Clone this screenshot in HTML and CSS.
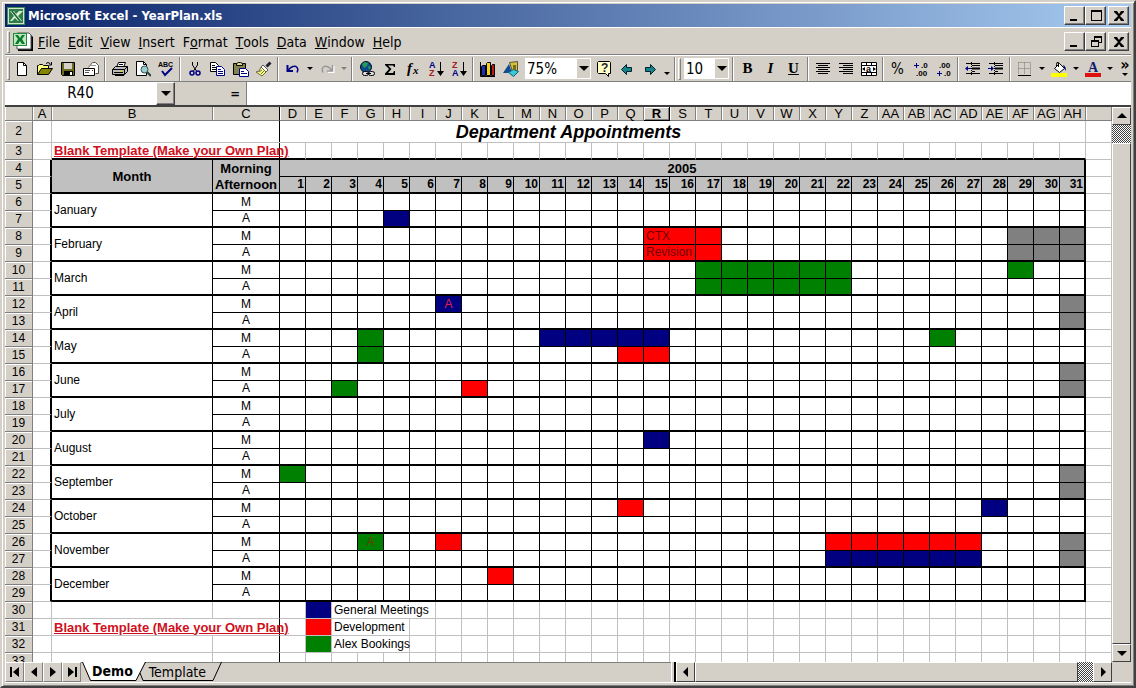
FILE: index.html
```
<!DOCTYPE html>
<html lang="en">
<head>
    <meta charset="UTF-8">
    <meta name="viewport" content="width=device-width, initial-scale=1.0">
    <title>Microsoft Excel - YearPlan.xls</title>
    <link rel="stylesheet" href="styles.css">
</head>
<body>
    <div class="window">
        <header class="title-bar">
            <svg class="logo" viewBox="0 0 18 18">
                <rect width="18" height="18" fill="#3f8a5a"/>
                <rect x="1" y="1" width="16" height="16" fill="#cfe6cc"/>
                <rect x="2" y="2" width="14" height="14" fill="#2f7d4a"/>
                <path d="M3 4h4l2 3 3-3h4l-5 5 4 5h-4l-3-3-3 3H3l4-5z" fill="#d8f0d0"/>
                <path d="M4 4h2l8 10h-2z" fill="#1b5e30"/>
            </svg>
            <h1>Microsoft Excel - YearPlan.xls</h1>
            <div class="window-buttons">
                <button aria-label="Minimize"><svg viewBox="0 0 16 14"><path d="M3 10h7v2H3z"/></svg></button>
                <button aria-label="Maximize"><svg viewBox="0 0 16 14"><path d="M3 1h11v11H3zM4 3v8h9V3z" fill-rule="evenodd"/></svg></button>
                <button class="close" aria-label="Close"><svg viewBox="0 0 16 14"><path d="M3 2h3l2 3 2-3h3v1L9 7l4 4v1h-3L8 9l-2 3H3v-1l4-4-4-4z"/></svg></button>
            </div>
        </header>

        <nav class="menu-bar">
            <span class="grip"></span>
            <svg class="doc-icon" viewBox="0 0 22 20">
                <path d="M6 2h12l3 3v14H6z" fill="#000"/>
                <path d="M5 1h12l2 2v14H5z" fill="#fff" stroke="#555"/>
                <rect x="1" y="1" width="14" height="13" fill="#1f8a3c"/>
                <rect x="2" y="2" width="12" height="11" fill="#bfe8c0"/>
                <path d="M3 3h3l2 3 2-3h3l-3 4 3 5h-3l-2-3-2 3H3l3-5z" fill="#0a7a2a"/>
            </svg>
            <button><u>F</u>ile</button>
            <button><u>E</u>dit</button>
            <button><u>V</u>iew</button>
            <button><u>I</u>nsert</button>
            <button>F<u>o</u>rmat</button>
            <button><u>T</u>ools</button>
            <button><u>D</u>ata</button>
            <button><u>W</u>indow</button>
            <button><u>H</u>elp</button>
            <div class="window-buttons">
                <button aria-label="Minimize workbook"><svg viewBox="0 0 16 14"><path d="M3 10h7v2H3z"/></svg></button>
                <button aria-label="Restore workbook"><svg viewBox="0 0 16 14"><path d="M6 1h8v7h-3v4H3V5h3zM7 3v2h4v2h2V3zM4 7v4h6V7z" fill-rule="evenodd"/></svg></button>
                <button class="close" aria-label="Close workbook"><svg viewBox="0 0 16 14"><path d="M3 2h3l2 3 2-3h3v1L9 7l4 4v1h-3L8 9l-2 3H3v-1l4-4-4-4z"/></svg></button>
            </div>
        </nav>

        <div class="toolbar">
            <span class="grip"></span>
            <button class="tool" aria-label="New"><svg viewBox="0 0 16 16"><path d="M3.500 1.500h6l3 3v10h-9z" fill="#fff" stroke="#000"/><path d="M9.500 1.500v3h3" fill="none" stroke="#000"/></svg></button>
            <button class="tool" aria-label="Open"><svg viewBox="0 0 16 16"><path d="M.5 13.500v-9h1l1-1h3l1 1h5v3" fill="#ffff80" stroke="#000"/><path d="M.5 13.500l4-6h11l-4 6z" fill="#848400" stroke="#000"/><path d="M9 2.500q2-2 4 0l1 1M14.500 1v3H12" fill="none" stroke="#000"/></svg></button>
            <button class="tool" aria-label="Save"><svg viewBox="0 0 16 16"><path d="M1.500 1.500h13v13h-12l-1-1z" fill="#6b6b20" stroke="#000"/><path d="M4 2h8v6H4z" fill="#d4d0c8"/><path d="M4 10h9v5H4z"/><path d="M10 11h2v3h-2z" fill="#fff"/></svg></button>
            <button class="tool" aria-label="E-mail"><svg viewBox="0 0 16 16"><path d="M5.500 6.500l4-5h3l3 3v8h-3" fill="#fff" stroke="#555"/><path d="M.5 7.500h11v7H.5z" fill="#fff" stroke="#000"/><path d="M2 9.500h5M2 11.500h4" stroke="#555"/><path d="M9 9h1v1H9z" fill="#c00"/><path d="M7 4.500h6" stroke="#999"/></svg></button>
            <span class="sep"></span>
            <button class="tool" aria-label="Print"><svg viewBox="0 0 16 16"><path d="M4.500 6.500l2-5h7l-2 5" fill="#fff" stroke="#000"/><path d="M.5 8.500l3-3h12v5l-3 3H.5z" fill="#bbb" stroke="#000"/><path d="M.5 8.500h12v5M12.500 8.500l3-3M2 11.500h9M7 3.500h4" fill="none" stroke="#000"/><path d="M3 14.500h9" stroke="#000"/><path d="M8 10h2v1H8z" fill="#dd0"/></svg></button>
            <button class="tool" aria-label="Print Preview"><svg viewBox="0 0 16 16"><path d="M1.500.5h7l3 3v11h-10z" fill="#fff" stroke="#000"/><path d="M8.500.5v3h3" fill="none" stroke="#000"/><circle cx="9.500" cy="8.500" r="3.500" fill="#9cc" stroke="#355"/><path d="M12 11l4 4" stroke="#244" stroke-width="2"/></svg></button>
            <button class="tool" aria-label="Spelling"><svg viewBox="0 0 16 16"><text x="0" y="6" font-size="7" font-weight="700">ABC</text><path d="M4 10l3 4 7-7" fill="none" stroke="#000084" stroke-width="2"/></svg></button>
            <span class="sep"></span>
            <button class="tool" aria-label="Cut"><svg viewBox="0 0 16 16"><path d="M5.500 1v3l4 6M10.500 1v3l-4 6" fill="none" stroke="#000"/><circle cx="5" cy="12" r="2" fill="none" stroke="#000084" stroke-width="1.500"/><circle cx="11" cy="12" r="2" fill="none" stroke="#000084" stroke-width="1.500"/></svg></button>
            <button class="tool" aria-label="Copy"><svg viewBox="0 0 16 16"><path d="M.5 1.500h5l3 3v6h-8z" fill="#fff" stroke="#000"/><path d="M2 4.500h3M2 6.500h4M2 8.500h4" stroke="#000"/><path d="M6.500 5.500h5l3 3v6h-8z" fill="#fff" stroke="#000084"/><path d="M8 8.500h3M8 10.500h5M8 12.500h5" stroke="#000084"/></svg></button>
            <button class="tool" aria-label="Paste"><svg viewBox="0 0 16 16"><path d="M.5 2.500h12v11H.5z" fill="#84844a" stroke="#000"/><path d="M3.500 4.500v-2l2-1h2l2 1v2z" fill="#dd8" stroke="#000"/><path d="M6.500 7.500h6l3 3v5h-9z" fill="#fff" stroke="#000084"/><path d="M8 10.500h3M8 12.500h6" stroke="#000084"/></svg></button>
            <button class="tool" aria-label="Format Painter"><svg viewBox="0 0 16 16"><path d="M14.500 1.500l-4 4" stroke="#223" stroke-width="3"/><path d="M7 4l5 5-2 2-5-5z" fill="#fff" stroke="#555"/><path d="M5 6l5 5-4 4-6-4 3-1z" fill="#ffff73" stroke="#665"/><path d="M3 11l3-2M5 13l3-3" stroke="#665"/></svg></button>
            <span class="sep"></span>
            <button class="tool" aria-label="Undo"><svg viewBox="0 0 16 16"><path d="M2.500 4v6H8" fill="none" stroke="#000084" stroke-width="2"/><path d="M3 9.500q4-5 8-4 3 2 1 6" fill="none" stroke="#000084" stroke-width="1.500"/></svg></button>
            <button class="drop" aria-label="Undo list"><span class="caret"></span></button>
            <button class="tool" aria-label="Redo" disabled><svg viewBox="0 0 16 16"><path d="M14.500 5v6H9" fill="none" stroke="#fff" stroke-width="2"/><path d="M13.500 4v6H8M13 9.500q-4-5-8-4-3 2-1 6" fill="none" stroke="#999" stroke-width="1.500"/></svg></button>
            <button class="drop" aria-label="Redo list" disabled><span class="caret"></span></button>
            <span class="sep"></span>
            <button class="tool" aria-label="Insert Hyperlink"><svg viewBox="0 0 16 16"><circle cx="7" cy="6" r="5.500" fill="#0a4a8c" stroke="#012"/><path d="M3 3l3-2 3 1-1 3-3 2zM9 5l3 1-2 3z" fill="#2a9a5a"/><rect x="3.500" y="10.500" width="6" height="4" rx="2" fill="#ddd" stroke="#000"/><rect x="9.500" y="10.500" width="6" height="4" rx="2" fill="#ddd" stroke="#000"/><path d="M7 12.500h5" stroke="#000"/></svg></button>
            <button class="tool" aria-label="AutoSum"><svg viewBox="0 0 16 16"><path d="M3 3h10v3h-1l-1-1.500H6L9.500 8 6 12h5l1-2h1v4H3v-1.500L7 8 3 4z"/></svg></button>
            <button class="tool" aria-label="Paste Function"><svg viewBox="0 0 16 16"><text class="serif" x="2" y="12" font-size="15" font-weight="700" font-style="italic">f</text><text class="serif" x="8" y="13" font-size="11" font-weight="700" font-style="italic">x</text></svg></button>
            <button class="tool" aria-label="Sort Ascending"><svg viewBox="0 0 16 16"><text x="1" y="7" font-size="9" font-weight="700" fill="#000084">A</text><text x="1" y="15" font-size="9" font-weight="700" fill="#a02020">Z</text><path d="M12 1h1v9h3l-3.500 5L9 10h3z"/></svg></button>
            <button class="tool" aria-label="Sort Descending"><svg viewBox="0 0 16 16"><text x="1" y="7" font-size="9" font-weight="700" fill="#a02020">Z</text><text x="1" y="15" font-size="9" font-weight="700" fill="#000084">A</text><path d="M12 1h1v9h3l-3.500 5L9 10h3z"/></svg></button>
            <span class="sep"></span>
            <button class="tool" aria-label="Chart Wizard"><svg viewBox="0 0 16 16"><path d="M.5 1v14.500H15" fill="none" stroke="#000"/><path d="M1.500 5.500l1-1h3v10h-4z" fill="#2030b0" stroke="#000"/><path d="M6.500 2.500l1-1h3v13h-4z" fill="#f0d020" stroke="#000"/><path d="M11.500 4.500l1-1h2v11h-3z" fill="#c01818" stroke="#000"/></svg></button>
            <button class="tool" aria-label="Drawing"><svg viewBox="0 0 16 16"><path d="M6.500 1.500l8-1v9l-5 1z" fill="#d8c030" stroke="#554"/><path d="M0 12L6 3l3 9z" fill="#104a90"/><path d="M5.500 11.500l5-3 5 2-5 5z" fill="#40c8d0" stroke="#068"/><path d="M10 4h3v5h-3z" fill="#707020"/></svg></button>
            <span class="combo zoom"><select aria-label="Zoom"><option>75%</option></select><span class="combo-arrow"><span class="caret big"></span></span></span>
            <button class="tool" aria-label="Help"><svg viewBox="0 0 16 16"><path d="M2.500.5h11l1 1v11h-2v3l-3-3h-7l-1-1v-10z" fill="#ffffc6" stroke="#000"/><text x="5" y="11" font-size="12" font-weight="700" fill="#223">?</text></svg></button>
            <button class="tool" aria-label="Back"><svg viewBox="0 0 16 16"><path d="M2.500 8.500l5-5v3h5v4h-5v3z" fill="#148484" stroke="#023"/></svg></button>
            <button class="tool" aria-label="Forward"><svg viewBox="0 0 16 16"><path d="M13.500 8.500l-5-5v3h-5v4h5v3z" fill="#148484" stroke="#023"/></svg></button>
            <button class="drop low" aria-label="More standard buttons"><span class="caret"></span></button>
            <span class="edge"></span>
            <span class="grip"></span>
            <span class="combo size"><select aria-label="Font Size"><option>10</option></select><span class="combo-arrow"><span class="caret big"></span></span></span>
            <span class="sep"></span>
            <button class="tool letter" aria-label="Bold"><b>B</b></button>
            <button class="tool letter" aria-label="Italic"><i>I</i></button>
            <button class="tool letter" aria-label="Underline"><u>U</u></button>
            <span class="sep"></span>
            <button class="tool" aria-label="Center"><svg viewBox="0 0 16 16"><path d="M1 2.500h14M3 4.500h10M1 6.500h14M3 8.500h10M1 10.500h14M3 12.500h10" stroke="#000"/></svg></button>
            <button class="tool" aria-label="Align Right"><svg viewBox="0 0 16 16"><path d="M1 2.500h14M5 4.500h10M1 6.500h14M5 8.500h10M1 10.500h14M5 12.500h10" stroke="#000"/></svg></button>
            <button class="tool" aria-label="Merge and Center"><svg viewBox="0 0 16 16"><path d="M.5 1.500h15v13H.5zM.5 4.500h15M.5 11.500h15M5.500 1.500v3M10.500 1.500v3M5.500 11.500v3M10.500 11.500v3" fill="#fff" stroke="#000"/><text x="5" y="11" font-size="9" font-weight="700">a</text><path d="M1 8l3-2v4zM15 8l-3-2v4z"/></svg></button>
            <span class="sep"></span>
            <button class="tool percent" aria-label="Percent Style">%</button>
            <button class="tool" aria-label="Increase Decimal"><svg viewBox="0 0 16 16"><text x="8" y="7" font-size="8" font-weight="700">.0</text><text x="3" y="15" font-size="8" font-weight="700">.00</text><path d="M1 4.500h5M3.500 2v5" stroke="#000084"/></svg></button>
            <button class="tool" aria-label="Decrease Decimal"><svg viewBox="0 0 16 16"><text x="3" y="7" font-size="8" font-weight="700">.00</text><text x="8" y="15" font-size="8" font-weight="700">.0</text><path d="M1 12.500h5M3.500 10v5" stroke="#000084"/></svg></button>
            <span class="sep"></span>
            <button class="tool" aria-label="Decrease Indent"><svg viewBox="0 0 16 16"><path d="M1 2.500h14M7 4.500h8M7 10.500h3M1 12.500h14" stroke="#000"/><path d="M7 7.500h8" stroke="#000" stroke-width="2"/><path d="M0 7.500L3 5v2h3v1H3v2z" fill="#000084"/><path d="M6.500 1v14" stroke="#000" stroke-dasharray="1 1"/></svg></button>
            <button class="tool" aria-label="Increase Indent"><svg viewBox="0 0 16 16"><path d="M1 2.500h14M7 4.500h8M7 10.500h3M1 12.500h14" stroke="#000"/><path d="M7 7.500h8" stroke="#000" stroke-width="2"/><path d="M6 7.500L3 5v2H0v1h3v2z" fill="#000084"/><path d="M6.500 1v14" stroke="#000" stroke-dasharray="1 1"/></svg></button>
            <span class="sep"></span>
            <button class="tool" aria-label="Borders"><svg viewBox="0 0 16 16"><path d="M1.500 1.500h12v12M1.500 1.500v12M7.500 1.500v12M1.500 7.500h12" fill="none" stroke="#777" stroke-dasharray="1 1"/><path d="M1 14.500h13" stroke="#000"/></svg></button>
            <button class="drop" aria-label="Border styles"><span class="caret"></span></button>
            <button class="tool" aria-label="Fill Color"><svg viewBox="0 0 16 16"><path d="M0 12h16v4H0z" fill="#ff0"/><path d="M3.500 7.500l5-5 5 5-5 4z" fill="#fff" stroke="#000"/><path d="M7.500 6V1.500q-2-1-2 2v2" fill="none" stroke="#000"/><path d="M12 4q3 1 3 6l-2-3z" fill="#000084"/></svg></button>
            <button class="drop" aria-label="Fill colors"><span class="caret"></span></button>
            <button class="tool" aria-label="Font Color"><svg viewBox="0 0 16 16"><path d="M0 12h16v4H0z" fill="#e01010"/><text class="serif" x="3" y="11" font-size="14" font-weight="700" fill="#102070">A</text></svg></button>
            <button class="drop" aria-label="Font colors"><span class="caret"></span></button>
            <button class="more" aria-label="More buttons"><span>»</span><span class="caret"></span></button>
        </div>

        <div class="formula-bar">
            <input class="name-box" aria-label="Name Box" value="R40">
            <button class="name-drop" aria-label="Names"><span class="caret big"></span></button>
            <button class="equals" aria-label="Edit Formula">=</button>
            <input class="formula" aria-label="Formula">
        </div>

        <main class="workspace">
            <div class="sheet">
                <table id="plan"></table>
            </div>
            <div class="scroll vertical">
                <button aria-label="Scroll up"><svg viewBox="0 0 10 10"><path d="M0 7l5-5 5 5z"/></svg></button>
                <span class="hatch"></span>
                <span class="thumb"></span>
                <button aria-label="Scroll down"><svg viewBox="0 0 10 10"><path d="M0 3l5 5 5-5z"/></svg></button>
            </div>
        </main>

        <footer class="tab-bar">
            <div class="tab-nav">
                <button aria-label="First sheet"><svg viewBox="0 0 12 12"><path d="M1 1h2v10H1zM10 1v10L4 6z"/></svg></button>
                <button aria-label="Previous sheet"><svg viewBox="0 0 12 12"><path d="M9 1v10L3 6z"/></svg></button>
                <button aria-label="Next sheet"><svg viewBox="0 0 12 12"><path d="M3 1v10l6-5z"/></svg></button>
                <button aria-label="Last sheet"><svg viewBox="0 0 12 12"><path d="M9 1h2v10H9zM2 1v10l6-5z"/></svg></button>
            </div>
            <div class="tabs">
                <svg class="slant" viewBox="0 0 10 19"><path d="M0 0h10v18H9z" fill="#fff"/><path d="M.5 0l8 18.500H10" fill="none" stroke="#000"/></svg>
                <button class="tab active">Demo</button>
                <svg class="slant wide" viewBox="0 0 16 19"><path d="M0 0h12L3 18H0z" fill="#fff"/><path d="M0 18.500h3L12.500 0M7 11l3 7.500h6" fill="none" stroke="#000"/></svg>
                <button class="tab">Template</button>
                <svg class="slant wide" viewBox="0 0 16 19"><path d="M0 18.500h7L15.500 0" fill="none" stroke="#000"/></svg>
            </div>
            <div class="scroll horizontal">
                <span class="splitter"></span>
                <button aria-label="Scroll left"><svg viewBox="0 0 10 10"><path d="M7 0v10L2 5z"/></svg></button>
                <span class="thumb"></span>
                <span class="hatch"></span>
                <button aria-label="Scroll right"><svg viewBox="0 0 10 10"><path d="M3 0v10l5-5z"/></svg></button>
            </div>
        </footer>
    </div>
    <script src="script.js"></script>
</body>
</html>
```
FILE: styles.css
```
:root {
    --face: #d4d0c8;
    --shadow: #808080;
    --dark: #404040;
    --grid: #c0c0c0;
    --navy: #000080;
    --red: #ff0000;
    --green: #008000;
    --ui-font: "DejaVu Sans Condensed", "DejaVu Sans", Tahoma, sans-serif;
    --sheet-font: "Liberation Sans", Arial, sans-serif;
}

* {
    box-sizing: border-box;
}

body {
    margin: 0;
    background-color: var(--face);
    color: #000;
    font-family: var(--ui-font);
    font-size: 13px;
}

button {
    margin: 0;
    padding: 0;
    border: none;
    background: none;
    color: inherit;
    font: inherit;
    display: flex;
    align-items: center;
    justify-content: center;
    flex: none;
}

svg {
    display: block;
    flex: none;
}

svg text {
    font-family: var(--sheet-font);
}

svg .serif {
    font-family: "Liberation Serif", serif;
}

.window {
    height: 100vh;
    display: flex;
    flex-direction: column;
    border: 2px solid var(--face);
    border-right-color: var(--dark);
    border-bottom-color: var(--dark);
    padding: 2px 3px 3px 3px;
    box-shadow: inset 1px 1px #fff, inset -1px -1px var(--shadow);
}

.title-bar {
    height: 23px;
    flex: none;
    display: flex;
    align-items: center;
    padding: 0 2px;
    background: linear-gradient(to right, #0a246a, #a6caf0);
    color: #fff;
}

.logo {
    width: 18px;
    height: 18px;
}

h1 {
    margin: 0 0 0 3px;
    font-size: 13px;
    font-weight: 700;
}

.window-buttons {
    margin-left: auto;
    display: flex;
}

.window-buttons button {
    width: 21px;
    height: 19px;
    background-color: var(--face);
    color: #000;
    border: 1px solid #fff;
    border-right-color: var(--dark);
    border-bottom-color: var(--dark);
    box-shadow: inset -1px -1px var(--shadow);
}

.window-buttons .close {
    margin-left: 2px;
}

.window-buttons svg {
    width: 16px;
    height: 14px;
}

.menu-bar {
    height: 28px;
    flex: none;
    display: flex;
    align-items: center;
    gap: 8px;
    padding: 1px 2px 0;
    border-top: 1px solid #fff;
    border-bottom: 1px solid var(--shadow);
    font-size: 14px;
}

.grip {
    width: 3px;
    height: 22px;
    flex: none;
    border: 1px solid #fff;
    border-right-color: var(--shadow);
    border-bottom-color: var(--shadow);
}

.doc-icon {
    width: 22px;
    height: 20px;
    margin: 0 -4px 0 -6px;
}

.toolbar {
    height: 27px;
    flex: none;
    display: flex;
    align-items: center;
    border-top: 1px solid #fff;
    border-bottom: 1px solid var(--shadow);
    padding: 0 0 0 2px;
}

.tool {
    width: 23px;
    height: 22px;
}

.tool svg {
    width: 16px;
    height: 16px;
}

.letter {
    font-family: "Liberation Serif", serif;
    font-size: 15px;
    font-weight: 700;
}

.percent {
    font-size: 15px;
}

.drop {
    width: 11px;
    height: 22px;
}

.drop:disabled {
    color: var(--shadow);
}

.drop.low {
    padding-top: 10px;
}

.caret {
    border: 3px solid transparent;
    border-top-color: currentColor;
    border-bottom: none;
}

.caret.big {
    border-width: 5px 5px 0;
}

.sep,
.edge {
    width: 2px;
    height: 24px;
    margin: 0 2px;
    flex: none;
    border-left: 1px solid var(--shadow);
    border-right: 1px solid #fff;
}

.combo {
    position: relative;
    height: 21px;
    flex: none;
    margin: 0 1px 0 3px;
    background-color: #fff;
}

.combo select {
    width: 100%;
    height: 21px;
    padding: 0 2px;
    border: none;
    background: none;
    appearance: none;
    font-family: var(--ui-font);
    font-size: 15px;
    color: #000;
}

.combo.zoom {
    width: 66px;
}

.combo.size {
    width: 45px;
}

.combo-arrow {
    position: absolute;
    top: 1px;
    right: 1px;
    width: 13px;
    height: 19px;
    display: flex;
    align-items: center;
    justify-content: center;
    background-color: var(--face);
    pointer-events: none;
}

.more {
    margin-left: auto;
    width: 12px;
    flex-direction: column;
    gap: 4px;
    font-size: 16px;
    font-weight: 700;
    line-height: 8px;
}

.formula-bar {
    height: 25px;
    flex: none;
    display: flex;
    border-bottom: 2px solid var(--dark);
}

.formula-bar input {
    border: none;
    padding: 0 0 2px;
    background-color: #fff;
    font-family: var(--ui-font);
    font-size: 15px;
    outline: none;
    min-width: 0;
    border-radius: 0;
}

.name-box {
    width: 151px;
    text-align: center;
}

.name-drop {
    width: 19px;
    border: 1px solid #fff;
    border-right-color: var(--dark);
    border-bottom-color: var(--dark);
    box-shadow: inset -1px -1px var(--shadow);
}

.equals {
    width: 72px;
    padding-right: 6px;
    justify-content: flex-end;
    font-weight: 700;
    border-right: 1px solid var(--shadow);
}

.formula {
    flex: 1;
}

.workspace {
    flex: 1;
    min-height: 0;
    display: flex;
}

.sheet {
    flex: 1;
    min-width: 0;
    overflow: hidden;
    background-color: #fff;
}

/* Worksheet grid */
table {
    width: 100%;
    table-layout: fixed;
    border-spacing: 0;
    font-family: var(--sheet-font);
    font-size: 12px;
    line-height: 15px;
}

.col-head { width: 28px; }
.col-a { width: 19px; }
.col-month { width: 161px; }
.col-half { width: 67px; }
.col-day { width: 26px; }

td,
th {
    height: 17px;
    padding: 0;
    border: 0 solid var(--grid);
    border-width: 0 1px 1px 0;
    white-space: nowrap;
    font-weight: 400;
    text-align: center;
}

thead th {
    height: 14px;
    background-color: var(--face);
    border-color: var(--shadow);
    font-size: 13px;
    line-height: 13px;
    box-shadow: inset 1px 0 #fff;
}

thead .selected {
    font-weight: 700;
    border-color: #000;
    box-shadow: inset 1px 1px #fff, inset -1px -1px var(--shadow);
}

.row-head {
    background-color: var(--face);
    border-color: var(--shadow);
    box-shadow: inset 1px 1px #fff;
}

.tall td,
.tall th {
    height: 22px;
}

.freeze {
    border-right-color: #000;
}

/* the frozen pane line runs through the merged title */
.plan-title {
    background: linear-gradient(#000, #000) 227px 0 / 1px 100% no-repeat;
    font-size: 18px;
    font-weight: 700;
    font-style: italic;
    line-height: 20px;
}

.top-edge {
    border-bottom: 2px solid #000;
}

.left-edge {
    border-right: 2px solid #000;
}

.box {
    border-color: #000;
}

.box.last {
    border-right-width: 2px;
}

.box.thick {
    border-bottom-width: 2px;
}

.box.open {
    border-bottom: none;
}

.heading {
    background-color: var(--grid);
    font-size: 13px;
    font-weight: 700;
}

.day {
    font-size: 12px;
    text-align: right;
    padding-right: 1px;
}

.month,
.label {
    padding-left: 2px;
    text-align: left;
}

.link {
    font-size: 13px;
    font-weight: 700;
}

.link a {
    color: #d01020;
}

.general { background-color: var(--navy); color: #e02040; }
.development { background-color: var(--red); color: #700000; }
.alex { background-color: var(--green); color: #604000; }
.closed { background-color: #808080; }

/* Scroll bars */
.scroll {
    display: flex;
    flex: none;
}

.scroll button,
.thumb {
    background-color: var(--face);
    border: 1px solid #fff;
    border-right-color: var(--dark);
    border-bottom-color: var(--dark);
}

.scroll svg {
    width: 10px;
    height: 10px;
}

.thumb {
    flex: 1;
}

.hatch {
    flex: none;
    background: repeating-conic-gradient(#404040 0 25%, #fff 0 50%) 0 0 / 2px 2px;
}

.vertical {
    width: 19px;
    flex-direction: column;
}

.vertical button {
    height: 18px;
}

.vertical .hatch {
    height: 18px;
}

.horizontal {
    width: 441px;
    margin-right: 19px;
}

.horizontal button {
    width: 19px;
}

.horizontal .hatch {
    width: 15px;
}

.splitter {
    width: 5px;
    border-left: 1px solid #fff;
    border-right: 2px solid #000;
}

.tab-bar {
    height: 21px;
    flex: none;
    display: flex;
    border-bottom: 1px solid #fff;
}

.tab-nav {
    display: flex;
}

.tab-nav button {
    width: 19px;
    border: 1px solid #fff;
    border-right-color: var(--shadow);
    border-bottom-color: var(--shadow);
}

.tab-nav svg {
    width: 12px;
    height: 12px;
}

.tabs {
    flex: 1;
    display: flex;
    border-top: 1px solid var(--shadow);
    padding-left: 1px;
}

.tab {
    height: 18px;
    font-size: 14px;
    border-bottom: 1px solid #000;
}

.tab.active {
    height: 19px;
    margin-top: -1px;
    background-color: #fff;
    font-weight: 700;
}

.slant {
    width: 10px;
    height: 19px;
    margin-top: -1px;
}

.slant.wide {
    width: 16px;
}
```
FILE: script.js
```
const plan = document.getElementById('plan');

const months = ['January', 'February', 'March', 'April', 'May', 'June', 'July',
    'August', 'September', 'October', 'November', 'December'];

// bookings per sheet row: [first day, last day, type, text]
const bookings = {
    7: [[5, 5, 'general']],
    8: [[15, 17, 'development', 'CTX'], [29, 31, 'closed']],
    9: [[15, 17, 'development', 'Revision'], [29, 31, 'closed']],
    10: [[17, 22, 'alex'], [29, 29, 'alex']],
    11: [[17, 22, 'alex']],
    12: [[7, 7, 'general', 'A'], [31, 31, 'closed']],
    13: [[31, 31, 'closed']],
    14: [[4, 4, 'alex'], [11, 15, 'general'], [26, 26, 'alex']],
    15: [[4, 4, 'alex'], [14, 15, 'development']],
    16: [[31, 31, 'closed']],
    17: [[3, 3, 'alex'], [8, 8, 'development'], [31, 31, 'closed']],
    20: [[15, 15, 'general']],
    22: [[1, 1, 'alex'], [31, 31, 'closed']],
    23: [[31, 31, 'closed']],
    24: [[14, 14, 'development'], [28, 28, 'general']],
    26: [[4, 4, 'alex', 'A'], [7, 7, 'development'], [22, 27, 'development'], [31, 31, 'closed']],
    27: [[22, 27, 'general'], [31, 31, 'closed']],
    28: [[9, 9, 'development']]
};

const legend = {
    30: ['general', 'General Meetings', 4],
    31: ['development', 'Development', 3],
    32: ['alex', 'Alex Bookings', 3]
};

const link = '<a href="#template">Blank Template (Make your Own Plan)</a>';

function td(cls, text = '', attrs = '') {
    return `<td class="${cls}" ${attrs}>${text}</td>`;
}

function columnName(index) {
    return index < 26 ? String.fromCharCode(65 + index) : 'A' + String.fromCharCode(39 + index);
}

function dayCells(row) {
    const thick = row % 2 ? ' thick' : '';
    let html = '';
    for (let day = 1; day <= 31; day++) {
        const hit = (bookings[row] || []).find(b => day >= b[0] && day <= b[1]);
        let cls = 'box' + thick + (day === 31 ? ' last' : '');
        let text = '';
        let attrs = '';
        if (hit) {
            cls += ' ' + hit[2];
            if (hit[3] && day === hit[0]) {
                text = hit[3];
                if (text.length > 1) {
                    // named bookings sit in a merged pair of cells
                    cls += ' label';
                    attrs = 'colspan="2"';
                    day++;
                }
            }
        }
        html += td(cls, text, attrs);
    }
    return html;
}

function rowCells(row) {
    if (row === 2) {
        return td('') + td('plan-title', 'Department Appointments', 'colspan="33"') + td('');
    }
    if (row === 3) {
        return td('') + td('label link freeze top-edge', link, 'colspan="2"') +
            td('top-edge').repeat(31) + td('');
    }
    if (row === 4) {
        return td('left-edge') + td('box thick heading', 'Month', 'rowspan="2"') +
            td('box open heading', 'Morning') + td('box last heading', '2005', 'colspan="31"') + td('');
    }
    if (row === 5) {
        let html = td('left-edge') + td('box thick heading', 'Afternoon');
        for (let day = 1; day <= 31; day++) {
            html += td('box thick heading day' + (day === 31 ? ' last' : ''), day);
        }
        return html + td('');
    }
    if (row < 30) {
        const morning = row % 2 === 0;
        return td('left-edge') +
            (morning ? td('box thick month', months[(row - 6) / 2], 'rowspan="2"') : '') +
            td(morning ? 'box' : 'box thick', morning ? 'M' : 'A') + dayCells(row) + td('');
    }
    let html = td('');
    html += row === 31 ? td('label link freeze', link, 'colspan="2"') : td('') + td('freeze');
    if (legend[row]) {
        const [cls, text, span] = legend[row];
        html += td('') + td(cls) + td('label', text, `colspan="${span}"`) + td('').repeat(29 - span);
    } else {
        html += td('').repeat(31);
    }
    return html + td('');
}

let html = '<colgroup><col class="col-head"><col class="col-a"><col class="col-month"><col class="col-half">' +
    '<col class="col-day">'.repeat(31) + '<col></colgroup><thead><tr><th></th>';
for (let i = 0; i < 34; i++) {
    const name = columnName(i);
    html += `<th class="${name === 'R' ? 'selected' : name === 'C' ? 'freeze' : ''}">${name}</th>`;
}
html += '<th></th></tr></thead><tbody>';
for (let row = 2; row <= 33; row++) {
    html += `<tr class="${row === 2 ? 'tall' : ''}"><th class="row-head">${row}</th>${rowCells(row)}</tr>`;
}
plan.innerHTML = html + '</tbody>';
```
